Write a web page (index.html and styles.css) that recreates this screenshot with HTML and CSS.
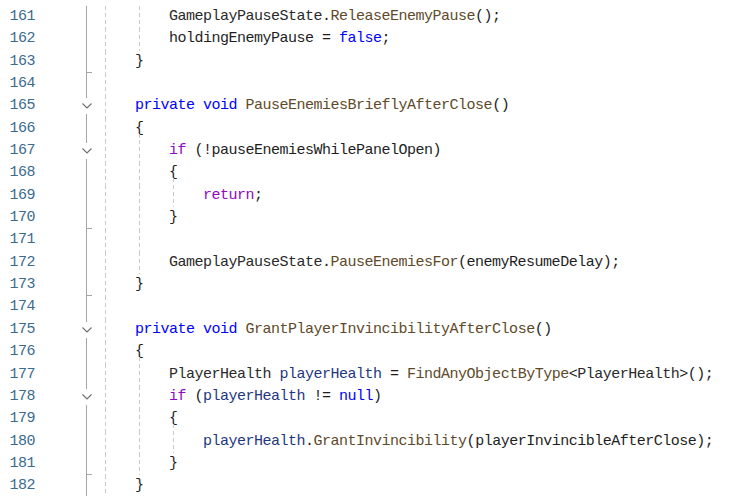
FILE: index.html
```html
<!DOCTYPE html>
<html>
<head>
<meta charset="utf-8">
<link rel="stylesheet" href="styles.css">
</head>
<body>
<div class="editor">
  <div class="line"><span class="num">161</span><span class="fold v"></span><span class="code"><i class="g g4"></i><i class="g g8"></i>        <span class="ty">GameplayPauseState</span>.<span class="me">ReleaseEnemyPause</span>();</span></div>
  <div class="line"><span class="num">162</span><span class="fold v"></span><span class="code"><i class="g g4"></i><i class="g g8"></i>        <span class="fi">holdingEnemyPause</span> = <span class="kw">false</span>;</span></div>
  <div class="line"><span class="num">163</span><span class="fold v end"></span><span class="code"><i class="g g4"></i>    }</span></div>
  <div class="line"><span class="num">164</span><span class="fold v"></span><span class="code"><i class="g g4"></i></span></div>
  <div class="line"><span class="num">165</span><span class="fold chev"><svg class="chv" viewBox="0 0 10 6" width="10" height="6"><polyline points="0.5,0.5 5,5 9.5,0.5"/></svg></span><span class="code"><i class="g g4"></i>    <span class="kw">private</span> <span class="kw">void</span> <span class="me">PauseEnemiesBrieflyAfterClose</span>()</span></div>
  <div class="line"><span class="num">166</span><span class="fold v"></span><span class="code"><i class="g g4"></i><i class="g g8 gs"></i>    {</span></div>
  <div class="line"><span class="num">167</span><span class="fold chev"><svg class="chv" viewBox="0 0 10 6" width="10" height="6"><polyline points="0.5,0.5 5,5 9.5,0.5"/></svg></span><span class="code"><i class="g g4"></i><i class="g g8"></i>        <span class="ct">if</span> (!<span class="fi">pauseEnemiesWhilePanelOpen</span>)</span></div>
  <div class="line"><span class="num">168</span><span class="fold v"></span><span class="code"><i class="g g4"></i><i class="g g8"></i><i class="g g12 gs"></i>        {</span></div>
  <div class="line"><span class="num">169</span><span class="fold v"></span><span class="code"><i class="g g4"></i><i class="g g8"></i><i class="g g12"></i>            <span class="ct">return</span>;</span></div>
  <div class="line"><span class="num">170</span><span class="fold v end"></span><span class="code"><i class="g g4"></i><i class="g g8"></i>        }</span></div>
  <div class="line"><span class="num">171</span><span class="fold v"></span><span class="code"><i class="g g4"></i><i class="g g8"></i></span></div>
  <div class="line"><span class="num">172</span><span class="fold v"></span><span class="code"><i class="g g4"></i><i class="g g8"></i>        <span class="ty">GameplayPauseState</span>.<span class="me">PauseEnemiesFor</span>(<span class="fi">enemyResumeDelay</span>);</span></div>
  <div class="line"><span class="num">173</span><span class="fold v end"></span><span class="code"><i class="g g4"></i>    }</span></div>
  <div class="line"><span class="num">174</span><span class="fold v"></span><span class="code"><i class="g g4"></i></span></div>
  <div class="line"><span class="num">175</span><span class="fold chev"><svg class="chv" viewBox="0 0 10 6" width="10" height="6"><polyline points="0.5,0.5 5,5 9.5,0.5"/></svg></span><span class="code"><i class="g g4"></i>    <span class="kw">private</span> <span class="kw">void</span> <span class="me">GrantPlayerInvincibilityAfterClose</span>()</span></div>
  <div class="line"><span class="num">176</span><span class="fold v"></span><span class="code"><i class="g g4"></i><i class="g g8 gs"></i>    {</span></div>
  <div class="line"><span class="num">177</span><span class="fold v"></span><span class="code"><i class="g g4"></i><i class="g g8"></i>        <span class="ty">PlayerHealth</span> <span class="lo">playerHealth</span> = <span class="me">FindAnyObjectByType</span>&lt;<span class="ty">PlayerHealth</span>&gt;();</span></div>
  <div class="line"><span class="num">178</span><span class="fold chev"><svg class="chv" viewBox="0 0 10 6" width="10" height="6"><polyline points="0.5,0.5 5,5 9.5,0.5"/></svg></span><span class="code"><i class="g g4"></i><i class="g g8"></i>        <span class="ct">if</span> (<span class="lo">playerHealth</span> != <span class="kw">null</span>)</span></div>
  <div class="line"><span class="num">179</span><span class="fold v"></span><span class="code"><i class="g g4"></i><i class="g g8"></i><i class="g g12 gs"></i>        {</span></div>
  <div class="line"><span class="num">180</span><span class="fold v"></span><span class="code"><i class="g g4"></i><i class="g g8"></i><i class="g g12"></i>            <span class="lo">playerHealth</span>.<span class="me">GrantInvincibility</span>(<span class="fi">playerInvincibleAfterClose</span>);</span></div>
  <div class="line"><span class="num">181</span><span class="fold v end"></span><span class="code"><i class="g g4"></i><i class="g g8"></i>        }</span></div>
  <div class="line"><span class="num">182</span><span class="fold v"></span><span class="code"><i class="g g4"></i>    }</span></div>
</div>
</body>
</html>
```

FILE: styles.css
```css
html, body {
  margin: 0;
  padding: 0;
  background: #ffffff;
}

.editor {
  padding-top: 6px;
  font-family: "Liberation Mono", "DejaVu Sans Mono", monospace;
  font-size: 15px;
  letter-spacing: -0.5px;
  color: #1e1e1e;
  height: 496px;
  overflow: hidden;
  box-sizing: border-box;
}

.line {
  display: flex;
  height: 22.35px;
  line-height: 22.35px;
}

.num {
  width: 35px;
  text-align: right;
  color: #3b6b8f;
  flex: none;
}

.fold {
  width: 66px;
  flex: none;
  position: relative;
}

.fold.v::before {
  content: "";
  position: absolute;
  left: 51px;
  top: 0;
  bottom: 0;
  width: 1px;
  background: #a5a5a5;
}

.fold.chev::before,
.fold.chev::after {
  content: "";
  position: absolute;
  left: 51px;
  width: 1px;
  background: #a5a5a5;
}

.fold.chev::before {
  top: 0;
  height: 3px;
}

.fold.chev::after {
  top: 19px;
  bottom: 0;
}

.fold.end::after {
  content: "";
  position: absolute;
  left: 51px;
  bottom: 0;
  width: 6px;
  height: 1px;
  background: #a5a5a5;
}

.chv {
  position: absolute;
  left: 47px;
  top: 8px;
  fill: none;
  stroke: #6e6e6e;
  stroke-width: 1.1;
}

.code {
  position: relative;
  flex: 1;
  white-space: pre;
}

.g {
  position: absolute;
  top: 0;
  bottom: 0;
  width: 1px;
  background: repeating-linear-gradient(to bottom, #c9c9c9 0 4px, transparent 4px 7px);
}

.g4 { left: 4px; }
.g8 { left: 38px; }
.g12 { left: 72px; }
.gs { top: 16px; }

.kw { color: #0000ff; }
.ct { color: #8f08c4; }
.ty { color: #2a2a2a; }
.me { color: #5e4a2a; }
.lo { color: #1f377f; }
.fi { color: #1e1e1e; }
```
